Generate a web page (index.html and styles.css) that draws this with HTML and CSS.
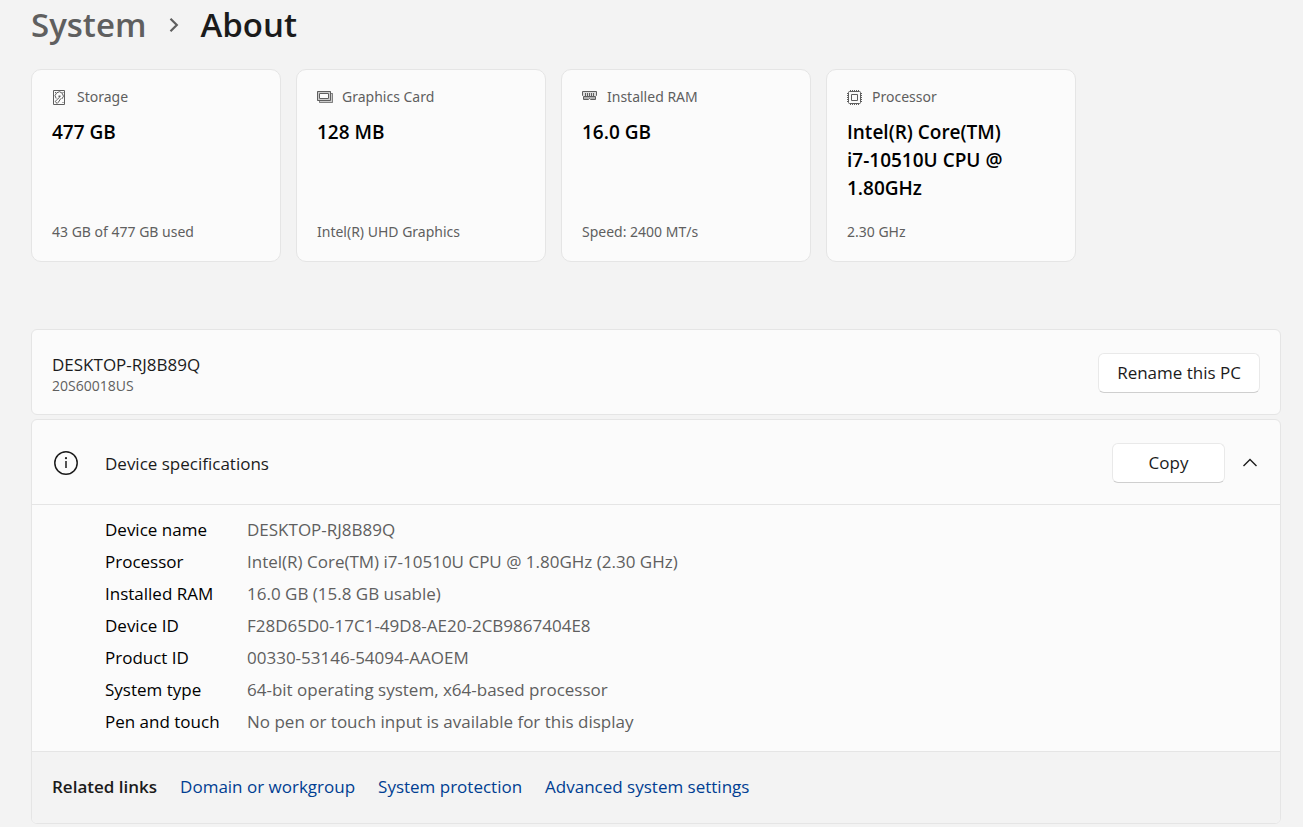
FILE: index.html
```html
<!DOCTYPE html>
<html lang="en">
<head>
<meta charset="utf-8">
<meta name="viewport" content="width=device-width, initial-scale=1">
<title>System - About</title>
<link rel="stylesheet" href="styles.css">
</head>
<body>
<main class="page">
  <h1 class="crumbs">
    <a class="crumb-parent" href="#">System</a>
    <svg class="crumb-arrow" width="10" height="16" viewBox="0 0 10 16" aria-hidden="true"><path d="M1.5 1.8 7.8 8 1.5 14.2" fill="none" stroke="currentColor" stroke-width="2.2"/></svg>
    <span>About</span>
  </h1>

  <section class="cards" aria-label="Hardware">
    <article class="card">
      <h2 class="card-label">
        <svg class="card-icon" width="16" height="18" viewBox="0 0 16 18" aria-hidden="true"><g fill="none" stroke="currentColor"><path d="M1.500 2.500h11v14h-11z"/><path d="M4.200 10.500a4 4 0 1 1 5.600 .5"/><path d="M7.800 9 4.400 12.200a1.500 1.500 0 1 0 2 2L8.800 10.500"/></g><path d="M3 4h1v1H3zM10.500 4h1v1h-1zM10.500 14h1v1h-1zM6.500 7.500h2v1.500h-2z" fill="currentColor"/></svg>
        Storage
      </h2>
      <p class="card-value">477 GB</p>
      <p class="card-note">43 GB of 477 GB used</p>
    </article>
    <article class="card">
      <h2 class="card-label">
        <svg class="card-icon" width="16" height="18" viewBox="0 0 16 18" aria-hidden="true"><path d="M2 13h12V5h2v10H2z" fill="currentColor" fill-opacity=".3"/><path d="M1 4h12v8H1z" fill="none" stroke="currentColor" stroke-width="2" stroke-opacity=".3"/><g fill="none" stroke="currentColor"><path d="M.5 3.500h13v9H.5zM2.500 5.500h9v5h-9z"/><path d="M2.500 13v1.500h13v-9H14" stroke-opacity=".7"/></g></svg>
        Graphics Card
      </h2>
      <p class="card-value">128 MB</p>
      <p class="card-note">Intel(R) UHD Graphics</p>
    </article>
    <article class="card">
      <h2 class="card-label">
        <svg class="card-icon" width="16" height="18" viewBox="0 0 16 18" aria-hidden="true"><path d="M.5 3.500h14v4l-1 1v3h-5l-1-1-1 1h-5v-3l-1-1z" fill="currentColor" fill-opacity=".2" stroke="currentColor"/><path d="M3.500 5v3M5.500 5v3M7.500 5v3M9.500 5v3M11.500 5v3M2 8.500h11" stroke="currentColor"/><path d="M2 9h11v2H9l-1.500-1L6 11H2z" fill="currentColor" fill-opacity=".35"/></svg>
        Installed RAM
      </h2>
      <p class="card-value">16.0 GB</p>
      <p class="card-note">Speed: 2400 MT/s</p>
    </article>
    <article class="card">
      <h2 class="card-label">
        <svg class="card-icon" width="16" height="18" viewBox="0 0 16 18" aria-hidden="true"><g fill="none" stroke="currentColor"><rect x="1.500" y="3.500" width="12" height="12" rx="1"/><path d="M4.500 6.500h6v6h-6z"/><path d="M3.500 2v1M5.500 2v1M7.500 2v1M9.500 2v1M11.500 2v1M3.500 16v1M5.500 16v1M7.500 16v1M9.500 16v1M11.500 16v1M0 5.500h1M0 7.500h1M0 9.500h1M0 11.500h1M0 13.500h1M14 5.500h1M14 7.500h1M14 9.500h1M14 11.500h1M14 13.500h1"/></g></svg>
        Processor
      </h2>
      <p class="card-value">Intel(R) Core(TM) i7-10510U CPU @ 1.80GHz</p>
      <p class="card-note">2.30 GHz</p>
    </article>
  </section>

  <section class="panel device">
    <div class="device-text">
      <h2 class="row-title">DESKTOP-RJ8B89Q</h2>
      <p class="device-model">20S60018US</p>
    </div>
    <button class="btn" type="button">Rename this PC</button>
  </section>

  <section class="panel">
    <header class="spec-head">
      <svg width="26" height="26" viewBox="0 0 26 26" aria-hidden="true"><circle cx="13" cy="13" r="11.200" fill="none" stroke="currentColor" stroke-width="1.500"/><path d="M13 11v7" stroke="currentColor" stroke-width="1.500"/><circle cx="13" cy="8.200" r="1.100" fill="currentColor"/></svg>
      <h2 class="row-title spec-title">Device specifications</h2>
      <button class="btn btn-copy" type="button">Copy</button>
      <button class="toggle" type="button" aria-label="Collapse device specifications" aria-expanded="true"><svg width="16" height="10" viewBox="0 0 16 10" aria-hidden="true"><path d="M1.500 8 8 1.500 14.500 8" fill="none" stroke="currentColor" stroke-width="1.400"/></svg></button>
    </header>
    <table class="specs">
      <tbody>
        <tr><th scope="row">Device name</th><td>DESKTOP-RJ8B89Q</td></tr>
        <tr><th scope="row">Processor</th><td>Intel(R) Core(TM) i7-10510U CPU @ 1.80GHz (2.30 GHz)</td></tr>
        <tr><th scope="row">Installed RAM</th><td>16.0 GB (15.8 GB usable)</td></tr>
        <tr><th scope="row">Device ID</th><td>F28D65D0-17C1-49D8-AE20-2CB9867404E8</td></tr>
        <tr><th scope="row">Product ID</th><td>00330-53146-54094-AAOEM</td></tr>
        <tr><th scope="row">System type</th><td>64-bit operating system, x64-based processor</td></tr>
        <tr><th scope="row">Pen and touch</th><td>No pen or touch input is available for this display</td></tr>
      </tbody>
    </table>
    <nav class="related" aria-label="Related links">
      <strong>Related links</strong>
      <a href="#">Domain or workgroup</a>
      <a href="#">System protection</a>
      <a href="#">Advanced system settings</a>
    </nav>
  </section>
</main>
</body>
</html>
```
FILE: styles.css
```css
* {
  box-sizing: border-box;
}

body {
  margin: 0;
  background: #f3f3f3;
  color: #1b1b1b;
  font-family: "Open Sans", "Noto Sans", sans-serif;
  font-size: 17px;
  line-height: 24px;
}

h1, h2, p {
  margin: 0;
  font-weight: 400;
}

a {
  text-decoration: none;
}

.page {
  padding: 0 22px 0 31px;
}

.crumbs {
  display: flex;
  align-items: center;
  height: 50px;
  margin-bottom: 19px;
  font-size: 33px;
  line-height: 48px;
  font-weight: 600;
}

.crumb-parent {
  color: #5f5f5f;
}

.crumb-arrow {
  margin: 0 21px 0 23px;
  color: #5f5f5f;
}

.cards {
  display: grid;
  grid-template-columns: repeat(auto-fill, 250px);
  gap: 15px;
  margin-bottom: 67px;
}

.card {
  display: flex;
  flex-direction: column;
  min-height: 193px;
  padding: 16px 20px 18px;
  background: #fbfbfb;
  border: 1px solid #e5e5e5;
  border-radius: 10px;
}

.card-label {
  display: flex;
  align-items: center;
  gap: 9px;
  margin-bottom: 10px;
}

.card-label,
.card-note {
  color: #5f5f5f;
  font-family: "Noto Sans", "Open Sans", sans-serif;
  font-size: 14px;
  line-height: 22px;
}

.card-value {
  padding-right: 28px;
  color: #000;
  font-size: 19px;
  line-height: 28px;
  font-weight: 600;
}

.card-note {
  margin-top: auto;
}

.panel {
  background: #fbfbfb;
  border: 1px solid #e5e5e5;
  border-radius: 6px;
  overflow: hidden;
}

.device {
  display: flex;
  align-items: center;
  justify-content: space-between;
  min-height: 86px;
  margin-bottom: 4px;
  padding: 2px 20px 0;
}

.row-title {
  font-size: 17px;
  line-height: 22px;
}

.device-text {
  padding-top: 4px;
}

.device-model {
  color: #5f5f5f;
  font-size: 14px;
  line-height: 20px;
}

.btn {
  height: 40px;
  padding: 0 18px;
  background: #fff;
  border: 1px solid #e9e9e9;
  border-bottom-color: #cfcfcf;
  border-radius: 6px;
  color: inherit;
  font: inherit;
}

.btn-copy {
  min-width: 113px;
}

.spec-head {
  display: flex;
  align-items: center;
  min-height: 85px;
  padding: 2px 20px 0 21px;
  border-bottom: 1px solid #e5e5e5;
}

.spec-title {
  flex: 1;
  padding: 2px 0 0 26px;
}

.toggle {
  display: flex;
  margin-left: 15px;
  padding: 0 2px;
  background: none;
  border: 0;
  color: inherit;
}

.specs {
  margin: 9px 0 13px 73px;
  border-collapse: collapse;
  line-height: 24px;
}

.specs th,
.specs td {
  padding: 4px 0;
  text-align: left;
  font-weight: 400;
}

.specs th {
  min-width: 142px;
  padding-right: 20px;
  color: #000;
}

.specs td {
  color: #5f5f5f;
}

.related {
  display: flex;
  flex-wrap: wrap;
  align-items: center;
  gap: 0 23px;
  min-height: 72px;
  padding: 0 20px 2px;
  background: #f3f3f3;
  border-top: 1px solid #e5e5e5;
}

.related strong {
  font-weight: 600;
}

.related a {
  color: #003e92;
}
```
